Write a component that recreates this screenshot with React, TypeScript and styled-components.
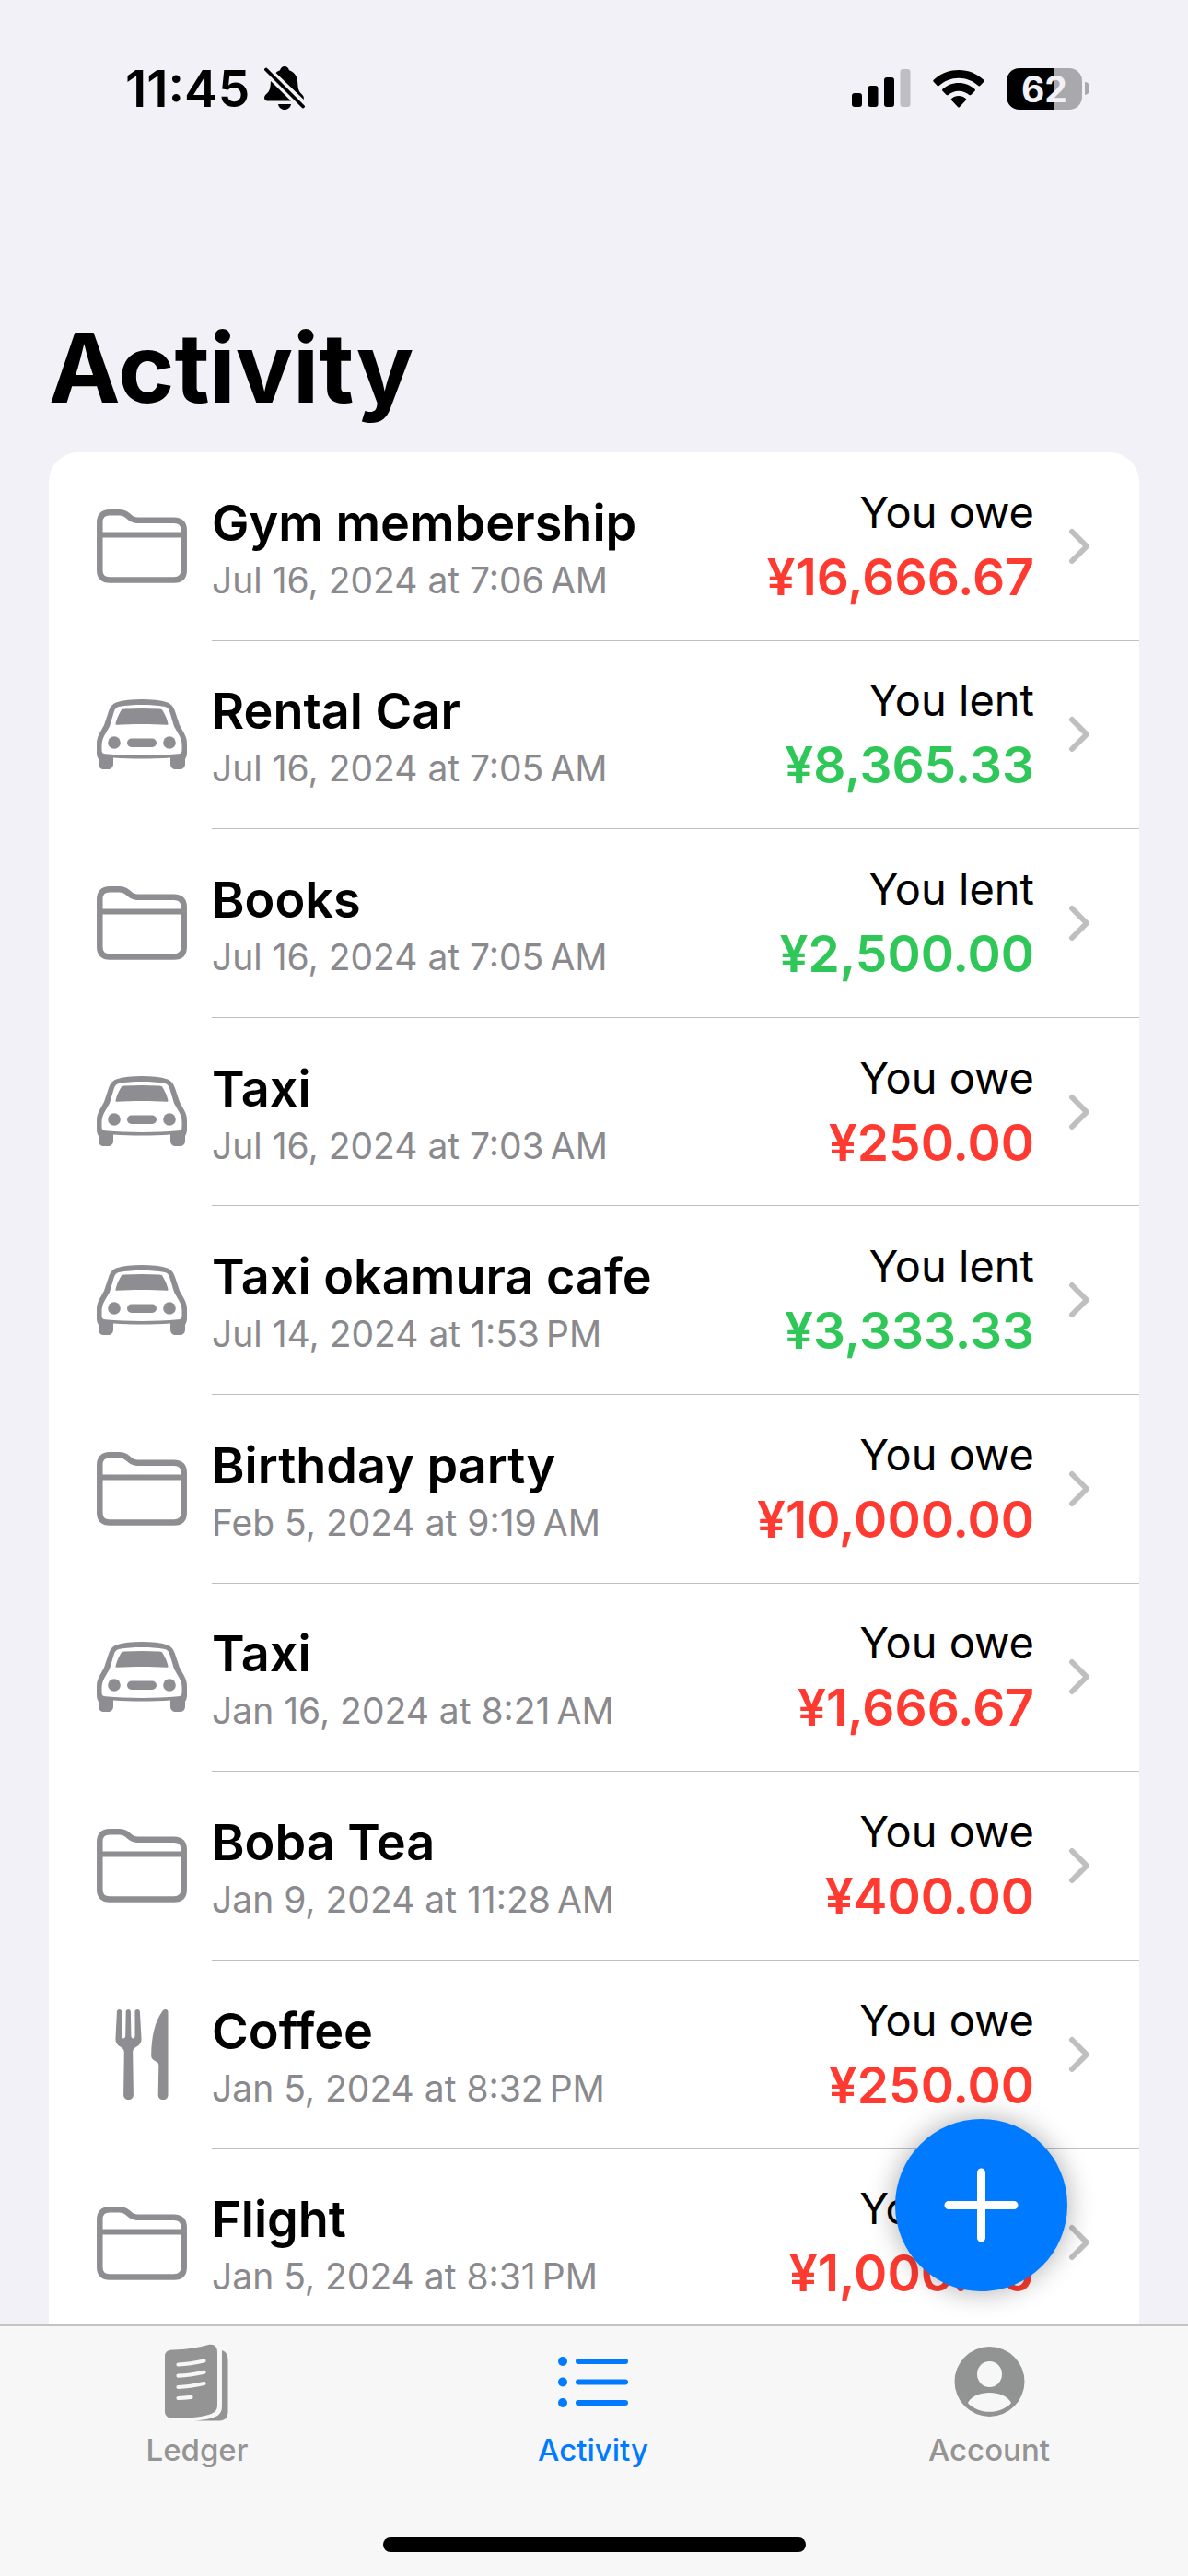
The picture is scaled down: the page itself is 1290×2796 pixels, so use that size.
import React from 'react';
import styled, { createGlobalStyle } from 'styled-components';

const GlobalStyle = createGlobalStyle`
  *, *::before, *::after { box-sizing: border-box; }
  body {
    margin: 0;
    background: #f2f1f7;
    color: #000;
    font-family: Inter, "Liberation Sans", sans-serif;
  }
`;

const Screen = styled.div`
  display: flex;
  flex-direction: column;
  min-height: 100vh;
  padding-bottom: 259px;
`;

const StatusBar = styled.header`
  display: flex;
  justify-content: space-between;
  align-items: center;
  height: 192px;
  padding: 0 107px 0 136px;
`;

const StatusGroup = styled.div<{ $gap: number }>`
  display: flex;
  align-items: center;
  gap: ${(p) => p.$gap}px;
`;

const Clock = styled.time`
  font-size: 55px;
  line-height: 64px;
  font-weight: 600;
`;

const Battery = styled.div`
  display: flex;
  align-items: center;
  gap: 3px;
`;

const BatteryBody = styled.div<{ $level: number }>`
  display: flex;
  align-items: center;
  justify-content: center;
  width: 82px;
  height: 45px;
  border-radius: 14px;
  background: linear-gradient(90deg, #000 ${(p) => p.$level}%, #a9a8ad ${(p) => p.$level}%);
  color: #f2f1f7;
  font-size: 39px;
  line-height: 45px;
  font-weight: 700;
`;

const BatteryTip = styled.div`
  width: 5px;
  height: 14px;
  border-radius: 0 5px 5px 0;
  background: #a9a8ad;
`;

const Title = styled.h1`
  margin: 0;
  padding: 142px 53px 27px;
  font-size: 104px;
  line-height: 130px;
  font-weight: 700;
`;

const Main = styled.main`
  display: flex;
  flex-direction: column;
  flex: 1;
`;

const List = styled.ul`
  flex: 1;
  display: grid;
  grid-auto-rows: 1fr;
  margin: 0 53px;
  padding: 0;
  list-style: none;
  background: #fff;
  border-radius: 32px 32px 0 0;
`;

const Row = styled.a`
  display: flex;
  height: 100%;
  min-height: 200px;
  padding-left: 52px;
  color: inherit;
  text-decoration: none;
`;

const IconCell = styled.span`
  flex: none;
  display: flex;
  align-items: center;
  width: 125px;
  color: #8e8d92;
`;

const RowBody = styled.span<{ $last: boolean }>`
  flex: 1;
  min-width: 0;
  display: flex;
  align-items: center;
  justify-content: space-between;
  padding-right: 53px;
  border-bottom: 1px solid ${(p) => (p.$last ? 'transparent' : '#bfbfc2')};
`;

const Stack = styled.span<{ $end?: boolean }>`
  display: flex;
  flex-direction: column;
  align-items: ${(p) => (p.$end ? 'flex-end' : 'flex-start')};
  flex: ${(p) => (p.$end ? 'none' : '1')};
  padding: ${(p) => (p.$end ? '0 0 4px' : '4px 0 0')};
  white-space: nowrap;
`;

const Name = styled.span`
  font-size: 54px;
  line-height: 70px;
  font-weight: 600;
`;

const When = styled.span`
  color: #8a8a8e;
  font-size: 39px;
  line-height: 54px;
`;

const Label = styled.span`
  font-size: 47px;
  line-height: 70px;
`;

const Amount = styled.span<{ $owed: boolean }>`
  color: ${(p) => (p.$owed ? '#ff3a30' : '#30c759')};
  font-size: 55px;
  line-height: 70px;
  font-weight: 600;
`;

const ChevronCell = styled.span`
  display: flex;
  margin-left: 37px;
`;

const AddButton = styled.button`
  position: fixed;
  right: 131px;
  bottom: 309px;
  display: flex;
  align-items: center;
  justify-content: center;
  width: 187px;
  height: 187px;
  padding: 0;
  border: 0;
  border-radius: 50%;
  background: #007aff;
  box-shadow: 0 0 30px rgba(0, 0, 0, 0.33);
`;

const TabBar = styled.nav`
  position: fixed;
  left: 0;
  right: 0;
  bottom: 0;
  padding-bottom: 26px;
  border-top: 2px solid #c3c3c6;
  background: #f7f7f7;
`;

const Tabs = styled.div`
  display: flex;
  height: 229px;
`;

const Tab = styled.a<{ $active?: boolean }>`
  flex: 1;
  display: flex;
  flex-direction: column;
  align-items: center;
  padding: 16px 2px 0 0;
  gap: 10px;
  color: ${(p) => (p.$active ? '#007aff' : '#949494')};
  font-size: 33px;
  line-height: 40px;
  font-weight: 500;
  text-decoration: none;
`;

const HomeIndicator = styled.div`
  width: 459px;
  height: 16px;
  margin: 0 auto;
  border-radius: 8px;
  background: #000;
`;

const FolderIcon = () => (
  <svg width="98" height="80" viewBox="0 0 98 80" fill="none" stroke="currentColor" strokeWidth="6.5" aria-hidden="true">
    <path d="M3.3 67V14C3.3 7 7 3.3 14 3.3h10.500c4 0 6.200.9 9 3.200l3 2.500c2.500 2 4.500 2.700 8 2.700H84c7 0 10.700 3.700 10.700 10.500V66c0 7-3.700 10.500-10.700 10.500H14C7 76.500 3.300 73 3.300 66Z" />
    <path d="M4 27.500h90" strokeWidth="6" />
  </svg>
);

const CarIcon = () => (
  <svg width="98" height="78" viewBox="0 0 98 78" fill="currentColor" aria-hidden="true">
    <path
      fillRule="evenodd"
      d="M21 3.500C29 .8 38 0 49 0s20 .8 28 3.500c4.500 2 6.500 5 8 9.500l5 15 5 9c2.200 4.200 3 7 3 12v9c0 3-.8 5-2 7v5c0 4-2.500 6-6 6h-4c-3.500 0-6-2-6-6v-6.500c-10 .8-20 1-31 1s-21-.2-31-1V70c0 4-2.500 6-6 6H8c-3.500 0-6-2-6-6v-5c-1.200-2-2-4-2-7v-9c0-5 .8-7.800 3-12l5-9 5-15c1.500-4.500 3.500-7.500 8-9.500ZM24 8c-3 .9-4.200 2.500-5.200 5.500L14 29.500 8.500 39C6.500 43 5.500 46 5.500 50v5c0 3 1.300 4 4 4.300C22 60.500 35 61 49 61s27-.5 39.500-1.700c2.700-.3 4-1.300 4-4.300v-5c0-4-1-7-3-11L84 29.500l-4.800-16c-1-3-2.200-4.600-5.200-5.500-8-1.600-16-2-25-2s-17 .4-25 2Z"
    />
    <path d="M26 13c1-2 2-2.400 4-2.500 12-.7 26-.7 38 0 2 .1 3 .5 4 2.500 2.500 4 4.500 9 5.500 13.500.2 1-.3 1.400-1.300 1.300-17-1.200-37-1.200-54.400 0-1 .1-1.500-.3-1.300-1.300C21.500 22 23.500 17 26 13Z" />
    <circle cx="19" cy="47" r="6.800" />
    <circle cx="79" cy="47" r="6.800" />
    <rect x="33" y="42.500" width="32" height="9.500" rx="4.700" />
  </svg>
);

const ForkKnifeIcon = () => (
  <svg width="98" height="98" viewBox="0 0 98 98" fill="currentColor" aria-hidden="true">
    <path d="M24.500 0c1.600 0 2.600 1 2.600 2.600V29c0 3.200 3.900 3.200 4.100 0L31.700 2.600C31.700 1 33 0 34.300 0s2.600 1 2.600 2.600L37.400 29c.2 3.200 4 3.200 4.100 0V2.600C41.500 1 42.500 0 44.100 0s2.700 1 2.800 2.600L48.500 31c.3 4.500-1.200 7.200-4.800 9.300-3.600 2-4.600 3.400-4.500 7l.7 45.200c0 3.500-2 5.500-5.300 5.500s-5.600-2-5.500-5.500l.7-45.200c.1-3.600-1-5-4.500-7-3.600-2.100-5.100-4.800-4.800-9.300L21.900 2.600C22 1 23 0 24.500 0Z" />
    <path d="M74.500 0c1.900 0 3 1.200 3 3v89.500c0 3.500-2 5.500-5.400 5.500s-5.500-2-5.400-5.500l.6-31c.1-2.500-.6-3.600-2.600-4.700l-2.200-1.300c-2.500-1.500-3.500-3.200-3.300-6.500C59.500 30 63 13 71.500 1.800 72.300.6 73.200 0 74.500 0Z" />
  </svg>
);

const ChevronIcon = () => (
  <svg width="24" height="40" viewBox="0 0 24 40" fill="none" stroke="#bfbfc0" strokeWidth="6" strokeLinecap="round" strokeLinejoin="round" aria-hidden="true">
    <path d="M4 4 20 20 4 36" />
  </svg>
);

const BellSlashIcon = () => (
  <svg width="44" height="48" viewBox="0 0 44 48" fill="currentColor" aria-hidden="true">
    <path d="M12.500 7C14 5.500 15.500 4.800 17 4.300 17.500 2 19.500 0 22 0s4.500 2 5 4.300c6.500 2.200 9 7.500 9.300 14.200.3 6.500 1.200 8.500 4.200 11.500 1.800 1.800 2.800 3.200 2.300 6L12.500 7Z" />
    <path d="M7 16 29 37.500H3.500C1.500 37.500 0 36.300 0 34.300c0-2 1-3 2.500-4.500 3-3 3.700-4.800 4.200-10.300L7 16Z" />
    <path d="M15 41h14c-.5 3.500-3.500 6-7 6s-6.500-2.500-7-6Z" />
    <path d="M2 3.500 42 43.500" fill="none" stroke="currentColor" strokeWidth="3.800" strokeLinecap="round" />
  </svg>
);

const SignalIcon = () => (
  <svg width="64" height="42" viewBox="0 0 64 42" aria-hidden="true">
    <rect x="0" y="26" width="11" height="15" rx="3" />
    <rect x="17.500" y="18" width="11" height="23" rx="3" />
    <rect x="35" y="9" width="11" height="32" rx="3" />
    <rect x="52.500" y="0" width="11" height="41" rx="3" fill="#bfbec4" />
  </svg>
);

const WifiIcon = () => (
  <svg width="56" height="41" viewBox="0 0 56 41" aria-hidden="true">
    <path d="M28 0c10.500 0 20 4 27.300 10.800.6.600.6 1.400 0 2l-4 4.200c-.6.600-1.400.6-2 0C43.500 11.700 36 8.700 28 8.700S12.500 11.700 6.700 17c-.6.600-1.400.6-2 0l-4-4.200c-.6-.6-.6-1.400 0-2C8 4 17.500 0 28 0Z" />
    <path d="M28 14c6.700 0 12.800 2.500 17.500 6.700.6.600.6 1.400 0 2l-4.200 4.200c-.6.600-1.300.6-1.900.1C36.300 24.300 32.300 22.700 28 22.700s-8.300 1.600-11.400 4.300c-.6.500-1.300.5-1.900-.1l-4.200-4.200c-.6-.6-.6-1.400 0-2C15.200 16.500 21.300 14 28 14Z" />
    <path d="M28 28c3 0 5.700 1.100 7.800 2.900.6.500.6 1.300 0 1.900L29 39.900c-.6.700-1.400.7-2 0l-6.800-7.100c-.6-.6-.6-1.400 0-1.900C22.300 29.100 25 28 28 28Z" />
  </svg>
);

const LedgerIcon = () => (
  <svg width="70" height="88" viewBox="0 0 70 88" aria-hidden="true">
    <path fill="currentColor" d="M62 10C66.500 11.500 68.500 15 68.500 20.500v56c0 6.500-3 10-9.500 10H31c14-.7 25-3.500 28-7 2.300-2.500 3-5 3-9Z" />
    <path fill="currentColor" d="M9 9.500C23 9 36 7 46.500 4.200 53.500 2.800 57 5.500 57 12.500V69c0 6-2.500 8.500-8 10.500-11 3.400-26 4.500-40 4.500-6.500 0-9.500-3.500-9.500-10V20c0-7 2-10 8.500-10.500Z" />
    <path fill="none" stroke="#f7f7f7" strokeWidth="4.200" strokeLinecap="round" d="M14.500 25.500c10-.5 19-2 28-4M14.500 37.700c10-.5 19-2 28-4M14.500 50c10-.5 19-2 28-4M14.500 62c5-.2 9-.6 14-1.200" />
  </svg>
);

const ListIcon = () => (
  <svg width="76" height="88" viewBox="0 0 76 88" fill="currentColor" aria-hidden="true">
    {[22, 44.5, 67].map((y) => (
      <g key={y}>
        <circle cx="5" cy={y} r="5" />
        <rect x="19" y={y - 3} width="57" height="6" rx="3" />
      </g>
    ))}
  </svg>
);

const AccountIcon = () => (
  <svg width="77" height="88" viewBox="0 0 77 88" aria-hidden="true">
    <circle cx="38.500" cy="44" r="38" fill="#929493" />
    <ellipse cx="38.500" cy="36" rx="13.500" ry="14" fill="#f7f7f7" />
    <path fill="#f7f7f7" d="M15.500 66c4-6.500 13-10 23-10s19 3.500 23 10c.5.800.3 1.500-.4 2.200C55.500 73.500 47.500 76.800 38.500 76.800s-17-3.300-22.600-8.600c-.7-.7-.9-1.400-.4-2.200Z" />
  </svg>
);

const PlusIcon = () => (
  <svg width="82" height="82" viewBox="0 0 82 82" fill="none" stroke="#fff" strokeWidth="9" strokeLinecap="round" aria-hidden="true">
    <path d="M40.500 5v71M5 40.500h71" />
  </svg>
);

const icons = { folder: FolderIcon, car: CarIcon, food: ForkKnifeIcon };

type Entry = {
  icon: keyof typeof icons;
  name: string;
  when: string;
  kind: 'owe' | 'lent';
  amount: string;
};

const entries: Entry[] = [
  { icon: 'folder', name: 'Gym membership', when: 'Jul 16, 2024 at 7:06\u202fAM', kind: 'owe', amount: '¥16,666.67' },
  { icon: 'car', name: 'Rental Car', when: 'Jul 16, 2024 at 7:05\u202fAM', kind: 'lent', amount: '¥8,365.33' },
  { icon: 'folder', name: 'Books', when: 'Jul 16, 2024 at 7:05\u202fAM', kind: 'lent', amount: '¥2,500.00' },
  { icon: 'car', name: 'Taxi', when: 'Jul 16, 2024 at 7:03\u202fAM', kind: 'owe', amount: '¥250.00' },
  { icon: 'car', name: 'Taxi okamura cafe', when: 'Jul 14, 2024 at 1:53\u202fPM', kind: 'lent', amount: '¥3,333.33' },
  { icon: 'folder', name: 'Birthday party', when: 'Feb 5, 2024 at 9:19\u202fAM', kind: 'owe', amount: '¥10,000.00' },
  { icon: 'car', name: 'Taxi', when: 'Jan 16, 2024 at 8:21\u202fAM', kind: 'owe', amount: '¥1,666.67' },
  { icon: 'folder', name: 'Boba Tea', when: 'Jan 9, 2024 at 11:28\u202fAM', kind: 'owe', amount: '¥400.00' },
  { icon: 'food', name: 'Coffee', when: 'Jan 5, 2024 at 8:32\u202fPM', kind: 'owe', amount: '¥250.00' },
  { icon: 'folder', name: 'Flight', when: 'Jan 5, 2024 at 8:31\u202fPM', kind: 'owe', amount: '¥1,000.00' },
];

const ActivityRow = ({ entry, last }: { entry: Entry; last: boolean }) => {
  const Icon = icons[entry.icon];
  return (
    <li>
      <Row href="#entry">
        <IconCell>
          <Icon />
        </IconCell>
        <RowBody $last={last}>
          <Stack>
            <Name>{entry.name}</Name>
            <When>{entry.when}</When>
          </Stack>
          <Stack $end>
            <Label>{entry.kind === 'owe' ? 'You owe' : 'You lent'}</Label>
            <Amount $owed={entry.kind === 'owe'}>{entry.amount}</Amount>
          </Stack>
          <ChevronCell>
            <ChevronIcon />
          </ChevronCell>
        </RowBody>
      </Row>
    </li>
  );
};

export default function App() {
  return (
    <>
      <GlobalStyle />
      <Screen>
        <StatusBar>
          <StatusGroup $gap={16}>
            <Clock>11:45</Clock>
            <BellSlashIcon />
          </StatusGroup>
          <StatusGroup $gap={24}>
            <SignalIcon />
            <WifiIcon />
            <Battery>
              <BatteryBody $level={62}>62</BatteryBody>
              <BatteryTip />
            </Battery>
          </StatusGroup>
        </StatusBar>
        <Main>
          <Title>Activity</Title>
          <List>
            {entries.map((entry, i) => (
              <ActivityRow key={i} entry={entry} last={i === entries.length - 1} />
            ))}
          </List>
        </Main>
      </Screen>
      <AddButton type="button" aria-label="Add expense">
        <PlusIcon />
      </AddButton>
      <TabBar>
        <Tabs>
          <Tab href="#ledger">
            <LedgerIcon />
            Ledger
          </Tab>
          <Tab href="#activity" $active aria-current="page">
            <ListIcon />
            Activity
          </Tab>
          <Tab href="#account">
            <AccountIcon />
            Account
          </Tab>
        </Tabs>
        <HomeIndicator />
      </TabBar>
    </>
  );
}
